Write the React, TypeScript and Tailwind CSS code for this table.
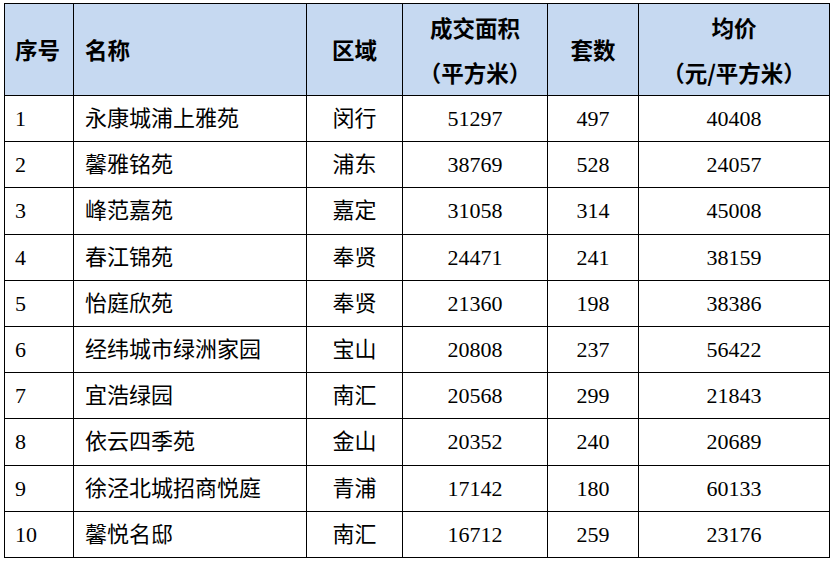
const rows: [number, string, string, number, number, number][] = [
  [1, "永康城浦上雅苑", "闵行", 51297, 497, 40408],
  [2, "馨雅铭苑", "浦东", 38769, 528, 24057],
  [3, "峰范嘉苑", "嘉定", 31058, 314, 45008],
  [4, "春江锦苑", "奉贤", 24471, 241, 38159],
  [5, "怡庭欣苑", "奉贤", 21360, 198, 38386],
  [6, "经纬城市绿洲家园", "宝山", 20808, 237, 56422],
  [7, "宜浩绿园", "南汇", 20568, 299, 21843],
  [8, "依云四季苑", "金山", 20352, 240, 20689],
  [9, "徐泾北城招商悦庭", "青浦", 17142, 180, 60133],
  [10, "馨悦名邸", "南汇", 16712, 259, 23176],
];

const head = "border border-black bg-[#c6d9f1] font-bold text-[22.5px] leading-[45px] [font-family:'Noto_Sans_CJK_SC',sans-serif]";
const cell = "border border-black text-[22px] [font-family:'Liberation_Serif','Noto_Sans_CJK_SC',serif]";
const cjk = "text-[22.8px]";

export default function App() {
  return (
    <div className="bg-white w-[833px] h-[562px] pl-[4px] pt-[3px] text-black">
      <table className="border-collapse table-fixed w-[825px]">
        <colgroup>
          <col className="w-[69px]" />
          <col className="w-[233px]" />
          <col className="w-[96px]" />
          <col className="w-[145px]" />
          <col className="w-[91px]" />
          <col className="w-[191px]" />
        </colgroup>
        <thead>
          <tr className="h-[92px]">
            <th className={`${head} text-left pl-[10px]`}>序号</th>
            <th className={`${head} text-left pl-[11px]`}>名称</th>
            <th className={`${head} text-center`}>区域</th>
            <th className={`${head} text-center`}>
              <div>成交面积</div>
              <div>（平方米）</div>
            </th>
            <th className={`${head} text-center`}>套数</th>
            <th className={`${head} text-center`}>
              <div>均价</div>
              <div>（元/平方米）</div>
            </th>
          </tr>
        </thead>
        <tbody>
          {rows.map(([n, name, area, size, count, price]) => (
            <tr key={n} className="h-[46.2px]">
              <td className={`${cell} text-left pl-[10px]`}>{n}</td>
              <td className={`${cell} ${cjk} text-left pl-[11px]`}>{name}</td>
              <td className={`${cell} ${cjk} text-center`}>{area}</td>
              <td className={`${cell} text-center`}>{size}</td>
              <td className={`${cell} text-center`}>{count}</td>
              <td className={`${cell} text-center`}>{price}</td>
            </tr>
          ))}
        </tbody>
      </table>
    </div>
  );
}
